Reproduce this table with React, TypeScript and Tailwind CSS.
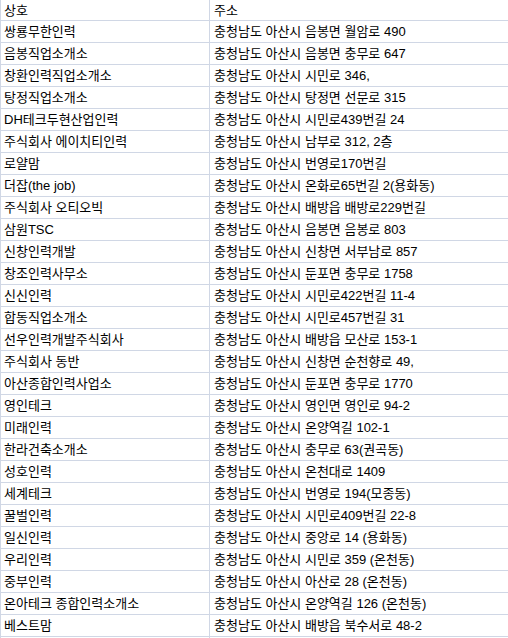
import React from "react";

const rows: [string, string][] = [
  ["쌍룡무한인력", "충청남도 아산시 음봉면 월암로 490"],
  ["음봉직업소개소", "충청남도 아산시 음봉면 충무로 647"],
  ["창환인력직업소개소", "충청남도 아산시 시민로 346,"],
  ["탕정직업소개소", "충청남도 아산시 탕정면 선문로 315"],
  ["DH테크두현산업인력", "충청남도 아산시 시민로439번길 24"],
  ["주식회사 에이치티인력", "충청남도 아산시 남부로 312, 2층"],
  ["로얄맘", "충청남도 아산시 번영로170번길"],
  ["더잡(the job)", "충청남도 아산시 온화로65번길 2(용화동)"],
  ["주식회사 오티오빅", "충청남도 아산시 배방읍 배방로229번길"],
  ["삼원TSC", "충청남도 아산시 음봉면 음봉로 803"],
  ["신창인력개발", "충청남도 아산시 신창면 서부남로 857"],
  ["창조인력사무소", "충청남도 아산시 둔포면 충무로 1758"],
  ["신신인력", "충청남도 아산시 시민로422번길 11-4"],
  ["합동직업소개소", "충청남도 아산시 시민로457번길 31"],
  ["선우인력개발주식회사", "충청남도 아산시 배방읍 모산로 153-1"],
  ["주식회사 동반", "충청남도 아산시 신창면 순천향로 49,"],
  ["아산종합인력사업소", "충청남도 아산시 둔포면 충무로 1770"],
  ["영인테크", "충청남도 아산시 영인면 영인로 94-2"],
  ["미래인력", "충청남도 아산시 온양역길 102-1"],
  ["한라건축소개소", "충청남도 아산시 충무로 63(권곡동)"],
  ["성호인력", "충청남도 아산시 온천대로 1409"],
  ["세계테크", "충청남도 아산시 번영로 194(모종동)"],
  ["꿀벌인력", "충청남도 아산시 시민로409번길 22-8"],
  ["일신인력", "충청남도 아산시 중앙로 14 (용화동)"],
  ["우리인력", "충청남도 아산시 시민로 359 (온천동)"],
  ["중부인력", "충청남도 아산시 아산로 28 (온천동)"],
  ["온아테크 종합인력소개소", "충청남도 아산시 온양역길 126 (온천동)"],
  ["베스트맘", "충청남도 아산시 배방읍 북수서로 48-2"],
];

function Row({ a, b, header }: { a: string; b: string; header?: boolean }) {
  return (
    <div className={`flex border-b border-[#d0d7e5] ${header ? "h-[21px]" : "h-[22px]"}`}>
      <div className="w-[210px] shrink-0 border-l border-r border-[#d0d7e5] pl-[3px] flex items-center whitespace-nowrap overflow-hidden">
        {a}
      </div>
      <div className="flex-1 pl-[4px] flex items-center whitespace-nowrap overflow-hidden">{b}</div>
    </div>
  );
}

export default function App() {
  return (
    <div
      className="w-[508px] h-[638px] overflow-hidden bg-white text-black text-[13px] leading-none"
      style={{ fontFamily: '"Liberation Sans", "Noto Sans CJK KR", sans-serif' }}
    >
      <Row a="상호" b="주소" header />
      {rows.map(([a, b], i) => (
        <Row key={i} a={a} b={b} />
      ))}
      <Row a="" b="" />
    </div>
  );
}
